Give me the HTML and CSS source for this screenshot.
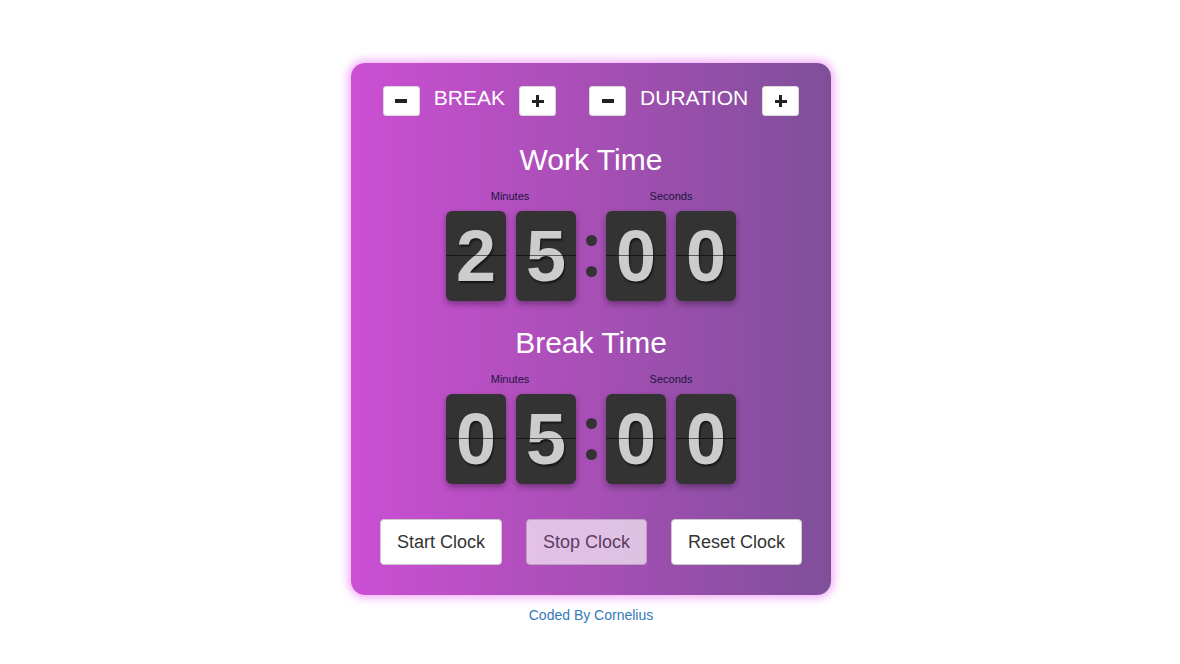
FILE: index.html
```html
<!DOCTYPE html>
<html lang="en">
<head>
<meta charset="utf-8">
<title>Pomodoro Clock</title>
<link rel="stylesheet" href="styles.css">
</head>
<body>
<main class="page">
  <section class="clock">
    <div class="settings">
      <div class="setting">
        <button class="step" aria-label="decrease break"><span class="minus"></span></button>
        <span class="setting-label">BREAK</span>
        <button class="step" aria-label="increase break"><span class="plus"></span></button>
      </div>
      <div class="setting">
        <button class="step" aria-label="decrease duration"><span class="minus"></span></button>
        <span class="setting-label">DURATION</span>
        <button class="step" aria-label="increase duration"><span class="plus"></span></button>
      </div>
    </div>

    <h2 class="title title-work">Work Time</h2>
    <div class="timer">
      <div class="labels"><span>Minutes</span><span>Seconds</span></div>
      <div class="digits">
        <div class="digit">2</div>
        <div class="digit">5</div>
        <div class="colon"><i></i><i></i></div>
        <div class="digit">0</div>
        <div class="digit">0</div>
      </div>
    </div>

    <h2 class="title title-break">Break Time</h2>
    <div class="timer">
      <div class="labels"><span>Minutes</span><span>Seconds</span></div>
      <div class="digits">
        <div class="digit">0</div>
        <div class="digit">5</div>
        <div class="colon"><i></i><i></i></div>
        <div class="digit">0</div>
        <div class="digit">0</div>
      </div>
    </div>

    <div class="controls">
      <button class="ctrl">Start Clock</button>
      <button class="ctrl ctrl-disabled">Stop Clock</button>
      <button class="ctrl ctrl-reset">Reset Clock</button>
    </div>
  </section>
  <p class="credit">Coded By Cornelius</p>
</main>
</body>
</html>
```

FILE: styles.css
```css
* { box-sizing: border-box; }

html, body {
  margin: 0;
  padding: 0;
  background: #ffffff;
  font-family: "Liberation Sans", Arial, sans-serif;
}

.page {
  display: flex;
  flex-direction: column;
  align-items: center;
  padding-top: 63px;
  padding-left: 2px;
}

.clock {
  width: 480px;
  height: 532px;
  border-radius: 14px;
  background: linear-gradient(to right, #cb4fd4 0%, #ab4fb8 45%, #7f4f9a 100%);
  box-shadow: 0 0 8px 3px rgba(236, 140, 245, 0.7);
  display: flex;
  flex-direction: column;
  align-items: center;
  padding-top: 23px;
  color: #ffffff;
}

.settings {
  display: flex;
  gap: 33px;
  height: 30px;
}

.setting {
  display: flex;
  align-items: center;
  gap: 14px;
}

.setting-label {
  font-size: 21px;
  line-height: 24px;
  margin-top: -6px;
  color: #ffffff;
}

.step {
  width: 37px;
  height: 30px;
  background: #ffffff;
  border: 1px solid #d8d8d8;
  border-radius: 3px;
  padding: 0;
  display: flex;
  align-items: center;
  justify-content: center;
}

.minus {
  display: block;
  width: 12px;
  height: 4px;
  background: #222;
}

.plus {
  display: block;
  width: 12px;
  height: 12px;
  position: relative;
}
.plus::before,
.plus::after {
  content: "";
  position: absolute;
  background: #222;
}
.plus::before { left: 0; top: 4.5px; width: 12px; height: 3px; }
.plus::after { left: 4.5px; top: 0; width: 3px; height: 12px; }

.title {
  margin: 0;
  font-weight: normal;
  font-size: 30px;
  line-height: 36px;
  color: #ffffff;
}
.title-work { margin-top: 26px; }
.title-break { margin-top: 24px; }

.timer {
  display: flex;
  flex-direction: column;
  align-items: center;
}

.labels {
  display: flex;
  width: 290px;
  margin-top: 12px;
  font-size: 11px;
  line-height: 13px;
  color: #1c1640;
}
.labels span {
  flex: 0 0 130px;
  text-align: center;
}
.labels span:first-child { margin-left: -1px; }
.labels span + span { margin-left: 31px; }

.digits {
  display: flex;
  margin-top: 8px;
}

.digit {
  width: 60px;
  height: 90px;
  margin-left: 10px;
  border-radius: 6px;
  background: #333333;
  box-shadow: 0 3px 6px rgba(0, 0, 0, 0.35);
  color: #cccccc;
  font-weight: bold;
  font-size: 72px;
  line-height: 90px;
  text-align: center;
  text-shadow: 1px 2px 2px rgba(0, 0, 0, 0.6);
  position: relative;
}
.digit:first-child { margin-left: 0; }
.digit::after {
  content: "";
  position: absolute;
  left: 0;
  right: 0;
  top: 44px;
  height: 1px;
  background: rgba(0, 0, 0, 0.55);
}

.colon + .digit { margin-left: 0; }

.colon {
  width: 30px;
  display: flex;
  flex-direction: column;
  align-items: center;
  padding-top: 24px;
  gap: 20px;
}
.colon i {
  display: block;
  width: 11px;
  height: 11px;
  border-radius: 50%;
  background: #333333;
}

.controls {
  display: flex;
  gap: 24px;
  margin-top: 35px;
}

.ctrl {
  height: 46px;
  padding: 0 16px;
  background: #ffffff;
  border: 1px solid #cccccc;
  border-radius: 4px;
  font-family: "Liberation Sans", Arial, sans-serif;
  font-size: 18px;
  color: #333333;
}
.ctrl-disabled { opacity: 0.65; }

.credit {
  margin: 10px 0 0;
  font-size: 14px;
  line-height: 20px;
  color: #337ab7;
}
```
